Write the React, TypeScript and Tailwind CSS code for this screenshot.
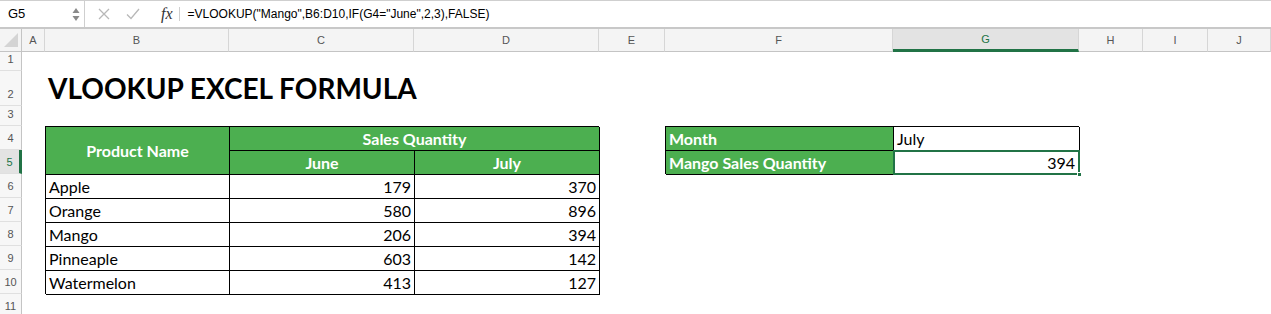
import React from "react";

const G = "bg-[#4caf50]";

function ColHead({ label, sel }: { label: string; sel?: boolean }) {
  return (
    <div
      className={
        "flex items-center justify-center border-r border-[#d6d6d6] text-[11px] " +
        (sel
          ? "bg-[#e3e3e3] text-[#217346] border-b-[3px] border-b-[#217346]"
          : "bg-[#f4f4f4] text-[#555] border-b border-b-[#c4c4c4]")
      }
      style={{ fontFamily: "'Liberation Sans', Arial, sans-serif" }}
    >
      {label}
    </div>
  );
}

function RowHead({ n, sel }: { n: number; sel?: boolean }) {
  return (
    <div
      className={
        "col-start-1 flex items-end justify-center pb-[3px] text-[11px] border-b border-[#e0e0e0] " +
        (sel
          ? "bg-[#e3e3e3] text-[#217346] border-r-[3px] border-r-[#217346]"
          : "bg-[#f7f7f7] text-[#555] border-r border-r-[#c4c4c4]")
      }
      style={{ gridRow: n + 1, fontFamily: "'Liberation Sans', Arial, sans-serif" }}
    >
      {n}
    </div>
  );
}

const rows: [string, number, number][] = [
  ["Apple", 179, 370],
  ["Orange", 580, 896],
  ["Mango", 206, 394],
  ["Pinneaple", 603, 142],
  ["Watermelon", 413, 127],
];

export default function App() {
  return (
    <div className="w-[1271px] h-[314px] overflow-hidden bg-white">
      {/* Formula bar */}
      <div
        className="flex h-[29px] border-t border-[#cfcfcf] border-b-2 border-b-[#c8c8c8] bg-white items-center text-[12px] text-black"
        style={{ fontFamily: "'Liberation Sans', Arial, sans-serif" }}
      >
        <div className="w-[85px] h-full flex items-center justify-between pl-[8px] pr-[3px] border-r border-[#cfcfcf] text-[13px]">
          <span>G5</span>
          <svg width="10" height="16" viewBox="0 0 10 16">
            <path d="M5 2 L8.5 7 L1.5 7 Z" fill="#8a8a8a" />
            <path d="M5 15 L8.5 10 L1.5 10 Z" fill="#8a8a8a" />
          </svg>
        </div>
        <div className="flex items-center h-full">
          <svg width="12" height="12" viewBox="0 0 12 12" className="ml-[13px]">
            <path d="M1 1 L11 11 M11 1 L1 11" stroke="#b8b8b8" strokeWidth="1.3" />
          </svg>
          <svg width="14" height="12" viewBox="0 0 14 12" className="ml-[16px]">
            <path d="M1 6.5 L5 10.5 L13 1" stroke="#b8b8b8" strokeWidth="1.3" fill="none" />
          </svg>
          <span
            className="ml-[21px] text-[16px] italic text-[#333]"
            style={{ fontFamily: "'Liberation Serif', 'Times New Roman', serif" }}
          >
            fx
          </span>
          <div className="ml-[6px] w-px h-[14px] bg-[#cfcfcf]" />
          <span className="ml-[8px]">=VLOOKUP("Mango",B6:D10,IF(G4="June",2,3),FALSE)</span>
        </div>
      </div>

      {/* Sheet grid */}
      <div
        className="grid grid-cols-[22px_23px_184px_185px_185px_66px_228px_186px_64px_65px_63px] grid-rows-[23px_19px_35px_20px_24px_24px_24px_24px_24px_24px_24px_24px]"
        style={{ fontFamily: "Lato, 'Noto Sans', sans-serif" }}
      >
        {/* corner */}
        <div className="relative bg-[#f4f4f4] border-r border-[#c4c4c4] border-b border-b-[#c4c4c4]">
          <svg width="16" height="16" viewBox="0 0 16 16" className="absolute right-[2px] bottom-[3px]">
            <path d="M15 1 L15 15 L1 15 Z" fill="#d4d4d4" />
          </svg>
        </div>
        <ColHead label="A" />
        <ColHead label="B" />
        <ColHead label="C" />
        <ColHead label="D" />
        <ColHead label="E" />
        <ColHead label="F" />
        <ColHead label="G" sel />
        <ColHead label="H" />
        <ColHead label="I" />
        <ColHead label="J" />

        {[1, 2, 3, 4, 5, 6, 7, 8, 9, 10, 11].map((n) => (
          <RowHead key={n} n={n} sel={n === 5} />
        ))}

        {/* Title */}
        <div className="col-start-3 col-span-4 row-start-3 flex items-end pl-[3px] pb-[4px]">
          <span className="text-[28px] font-bold leading-none text-black whitespace-nowrap">
            VLOOKUP EXCEL FORMULA
          </span>
        </div>

        {/* Main table */}
        <div className="col-start-3 col-span-3 row-start-5 row-span-7 grid grid-cols-[184px_185px_185px] grid-rows-[24px_24px_24px_24px_24px_24px_24px] border-t border-l border-black text-[16px] text-black">
          <div className={`${G} row-span-2 border-r border-b border-black flex items-center justify-center text-white font-bold`}>
            Product Name
          </div>
          <div className={`${G} col-span-2 border-r border-b border-black flex items-center justify-center text-white font-bold`}>
            Sales Quantity
          </div>
          <div className={`${G} border-r border-b border-black flex items-center justify-center text-white font-bold`}>
            June
          </div>
          <div className={`${G} border-r border-b border-black flex items-center justify-center text-white font-bold`}>
            July
          </div>
          {rows.map(([name, a, b]) => (
            <React.Fragment key={name}>
              <div className="border-r border-b border-black flex items-center pl-[3px]">{name}</div>
              <div className="border-r border-b border-black flex items-center justify-end pr-[3px]">{a}</div>
              <div className="border-r border-b border-black flex items-center justify-end pr-[3px]">{b}</div>
            </React.Fragment>
          ))}
        </div>

        {/* Lookup table */}
        <div className="col-start-7 col-span-2 row-start-5 row-span-2 grid grid-cols-[228px_186px] grid-rows-[24px_24px] border-t border-l border-black text-[16px] text-black">
          <div className={`${G} border-r border-b border-black flex items-center pl-[3px] text-white font-bold`}>Month</div>
          <div className="border-r border-b border-black flex items-center pl-[3px]">July</div>
          <div className={`${G} border-r border-b border-black flex items-center pl-[3px] text-white font-bold`}>
            Mango Sales Quantity
          </div>
          <div className="relative border-r border-b border-black flex items-center justify-end pr-[4px]">
            394
            <div className="absolute -left-px -top-px -right-px -bottom-px border-2 border-[#217346] pointer-events-none" />
            <div className="absolute -right-[3px] -bottom-[3px] w-[5px] h-[5px] bg-[#217346] border border-white" />
          </div>
        </div>
      </div>
    </div>
  );
}
